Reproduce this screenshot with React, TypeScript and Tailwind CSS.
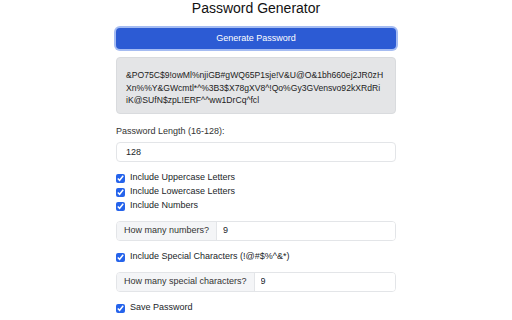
import { useState } from 'react'

const PASSWORD_LINES = [
  '&PO75C$9!owMl%njiGB#gWQ65P1sje!V&U@O&1bh660ej2JR0zH',
  'Xn%%Y&GWcmtl*^%3B3$X78gXV8^!Qo%Gy3GVensvo92kXRdRi',
  'iK@SUfN$zpL!ERF^^ww1DrCq^fcl',
]

function Check({ label, checked, onChange }: { label: string; checked: boolean; onChange: (v: boolean) => void }) {
  return (
    <label className="flex items-center gap-[5px] h-[14px]">
      <input
        type="checkbox"
        checked={checked}
        onChange={(e) => onChange(e.target.checked)}
        className="w-[9px] h-[9px] m-0 accent-[#2563eb]"
      />
      <span>{label}</span>
    </label>
  )
}

function CountGroup({ label, value }: { label: string; value: string }) {
  return (
    <div className="flex h-[20px] rounded-[4px] border border-[#e3e5e8] overflow-hidden">
      <div className="bg-[#f4f5f7] border-r border-[#e3e5e8] px-[7px] flex items-center text-[#333]">{label}</div>
      <input defaultValue={value} className="flex-1 px-[6px] outline-none bg-white" />
    </div>
  )
}

export default function App() {
  const [upper, setUpper] = useState(true)
  const [lower, setLower] = useState(true)
  const [nums, setNums] = useState(true)
  const [special, setSpecial] = useState(true)
  const [save, setSave] = useState(true)

  return (
    <div className="w-[512px] h-[320px] overflow-hidden bg-white text-[#212529] text-[9px]" style={{ fontFamily: '"Liberation Sans", Arial, sans-serif' }}>
      <div className="w-[280px] mx-auto">
        <h1 className="text-center text-[14px] leading-[16px] pt-[0px] text-[#111]">Password Generator</h1>

        <button className="mt-[12px] w-full h-[21px] rounded-[4px] bg-[#2c5bd4] text-white text-[9px] ring-2 ring-[#a5bcf2]">
          Generate Password
        </button>

        <div className="mt-[8px] h-[57px] rounded-[4px] bg-[#e4e5e7] border border-[#d9dbde] px-[9px] pt-[11px] leading-[12.5px] text-[8.6px] text-[#222]">
          {PASSWORD_LINES.map((l) => (
            <div key={l} className="whitespace-nowrap">{l}</div>
          ))}
        </div>

        <div className="mt-[11px] leading-[12px] text-[#333]">Password Length (16-128):</div>
        <input
          defaultValue="128"
          className="mt-[5px] w-full h-[20px] rounded-[4px] border border-[#e3e5e8] px-[9px] outline-none"
        />

        <div className="mt-[9px] flex flex-col">
          <Check label="Include Uppercase Letters" checked={upper} onChange={setUpper} />
          <Check label="Include Lowercase Letters" checked={lower} onChange={setLower} />
          <Check label="Include Numbers" checked={nums} onChange={setNums} />
        </div>

        <div className="mt-[8px]">
          <CountGroup label="How many numbers?" value="9" />
        </div>

        <div className="mt-[9px]">
          <Check label="Include Special Characters (!@#$%^&*)" checked={special} onChange={setSpecial} />
        </div>

        <div className="mt-[8px]">
          <CountGroup label="How many special characters?" value="9" />
        </div>

        <div className="mt-[9px]">
          <Check label="Save Password" checked={save} onChange={setSave} />
        </div>
      </div>
    </div>
  )
}
